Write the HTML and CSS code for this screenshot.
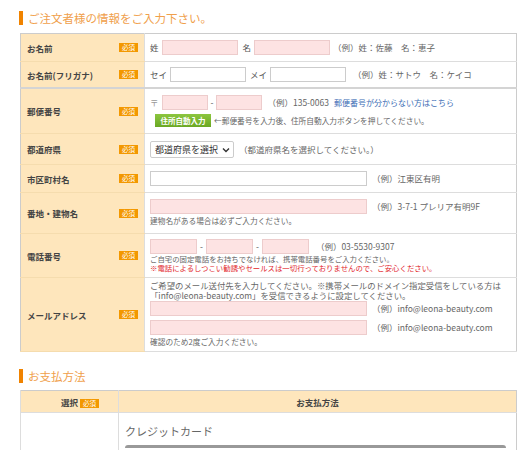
FILE: index.html
```html
<!DOCTYPE html>
<html lang="ja">
<head>
  <meta charset="UTF-8" />
  <title>ご注文者様の情報</title>
  <link rel="stylesheet" href="styles.css">
</head>
<body>
  <div class="page">
    <h2 class="sec-title">ご注文者様の情報をご入力下さい。</h2>
    <table class="form-table">
      <colgroup><col class="c-label"><col></colgroup>
      <tr>
        <th><div class="th-in"><span>お名前</span><span class="req">必須</span></div></th>
        <td>
          <div class="line">
            <span>姓</span><input class="inp need w-name" type="text">
            <span class="ml2">名</span><input class="inp need w-name" type="text">
            <span class="ex">（例）姓：佐藤　名：恵子</span>
          </div>
        </td>
      </tr>
      <tr class="row-kana">
        <th><div class="th-in"><span>お名前(フリガナ)</span><span class="req">必須</span></div></th>
        <td>
          <div class="line">
            <span>セイ</span><input class="inp w-name" type="text">
            <span class="ml1">メイ</span><input class="inp w-name" type="text">
            <span class="ex ml4">（例）姓：サトウ　名：ケイコ</span>
          </div>
        </td>
      </tr>
      <tr>
        <th><div class="th-in"><span>郵便番号</span><span class="req">必須</span></div></th>
        <td>
          <div class="line">
            <span class="zip-mark">〒</span><input class="inp need w-zip" type="text">
            <span>-</span><input class="inp need w-zip" type="text">
            <span class="ex ml2">（例）135-0063</span>
            <a class="link" href="#">郵便番号が分からない方はこちら</a>
          </div>
          <div class="line mt4">
            <button class="btn-auto" type="button">住所自動入力</button>
            <span class="note">←郵便番号を入力後、住所自動入力ボタンを押してください。</span>
          </div>
        </td>
      </tr>
      <tr class="row-pref">
        <th><div class="th-in"><span>都道府県</span><span class="req">必須</span></div></th>
        <td>
          <div class="line">
            <select class="pref"><option>都道府県を選択</option></select>
            <span class="ex ml2">（都道府県名を選択してください。）</span>
          </div>
        </td>
      </tr>
      <tr>
        <th><div class="th-in"><span>市区町村名</span><span class="req">必須</span></div></th>
        <td>
          <div class="line">
            <input class="inp w-long" type="text">
            <span class="ex ml2">（例）江東区有明</span>
          </div>
        </td>
      </tr>
      <tr>
        <th><div class="th-in"><span>番地・建物名</span><span class="req">必須</span></div></th>
        <td>
          <div class="line">
            <input class="inp need w-long" type="text">
            <span class="ex ml2">（例）3-7-1 プレリア有明9F</span>
          </div>
          <p class="note addr">建物名がある場合は必ずご入力ください。</p>
        </td>
      </tr>
      <tr class="row-tel">
        <th><div class="th-in"><span>電話番号</span><span class="req">必須</span></div></th>
        <td>
          <div class="line">
            <input class="inp need w-tel" type="text"><span>-</span>
            <input class="inp need w-tel" type="text"><span>-</span>
            <input class="inp need w-tel" type="text">
            <span class="ex ml4">（例）03-5530-9307</span>
          </div>
          <p class="note tight">ご自宅の固定電話をお持ちでなければ、携帯電話番号をご入力ください。</p>
          <p class="note tight red">※電話によるしつこい勧誘やセールスは一切行っておりませんので、ご安心ください。</p>
        </td>
      </tr>
      <tr class="row-mail">
        <th><div class="th-in"><span>メールアドレス</span><span class="req">必須</span></div></th>
        <td>
          <p class="note mail">ご希望のメール送付先を入力してください。※携帯メールのドメイン指定受信をしている方は<br>「info@leona-beauty.com」を受信できるように設定してください。</p>
          <div class="line">
            <input class="inp need w-long" type="text">
            <span class="ex ml2">（例）info@leona-beauty.com</span>
          </div>
          <div class="line mt4">
            <input class="inp need w-long" type="text">
            <span class="ex ml2">（例）info@leona-beauty.com</span>
          </div>
          <p class="note confirm">確認のため2度ご入力ください。</p>
        </td>
      </tr>
    </table>

    <h2 class="sec-title sec-pay">お支払方法</h2>
    <table class="pay-table">
      <colgroup><col class="c-select"><col></colgroup>
      <tr>
        <th class="th-select">選択 <span class="req">必須</span></th>
        <th>お支払方法</th>
      </tr>
      <tr>
        <td></td>
        <td>
          <p class="pay-name">クレジットカード</p>
          <div class="pay-box"></div>
        </td>
      </tr>
    </table>
  </div>
</body>
</html>
```

FILE: styles.css
```css
* {
  box-sizing: border-box;
}
body {
  margin: 0;
  background: #fff;
  font-family: "Noto Sans CJK JP", "Noto Sans", sans-serif;
  color: #555;
  overflow: hidden;
}
.page {
  padding: 11px 0 0 19px;
}
.sec-title {
  margin: 0 0 8px;
  padding-left: 5px;
  border-left: 4px solid #f08300;
  font-size: 11.5px;
  font-weight: normal;
  line-height: 14px;
  color: #f0a04b;
}
.sec-pay {
  margin-top: 17px;
  margin-bottom: 7px;
}

/* order form */
.form-table {
  width: 497px;
  margin-left: 1px;
  border-collapse: collapse;
  table-layout: fixed;
  border: 1px solid #ccc;
}
.c-label {
  width: 124px;
}
.form-table th {
  background: #fee6bc;
  border-bottom: 1px solid #f5dcae;
  padding: 0 6px;
  text-align: left;
  font-size: 8.5px;
  font-weight: bold;
  color: #444;
}
.form-table td {
  padding: 6px 5px;
  border-bottom: 1px solid #ddd;
  border-left: 1px solid #ddd;
  font-size: 8.5px;
  line-height: 11px;
}
.form-table .row-kana th,
.form-table .row-kana td {
  border-bottom: 2px solid #d4d4d4;
}
.form-table .row-kana td {
  padding-top: 5px;
  padding-bottom: 5px;
}
.form-table .row-pref td {
  padding-top: 7px;
  padding-bottom: 6px;
}
.form-table .row-tel td {
  padding-top: 5px;
  padding-bottom: 5px;
}
.form-table .row-mail td {
  padding-top: 3px;
  padding-bottom: 4px;
}
.th-in {
  display: flex;
  justify-content: space-between;
  align-items: center;
}
.req {
  display: inline-block;
  background: #f39800;
  color: #fff;
  font-size: 6.5px;
  font-weight: normal;
  line-height: 9px;
  width: 19px;
  text-align: center;
}
.line {
  display: flex;
  align-items: center;
  gap: 3px;
  white-space: nowrap;
}
.ml1 { margin-left: 1px; }
.ml2 { margin-left: 2px; }
.ml4 { margin-left: 4px; }
.mt4 { margin-top: 4px; }

.inp {
  height: 15px;
  margin: 0;
  padding: 0 2px;
  border: 1px solid #ccc;
  background: #fff;
  font-size: 9px;
}
.inp.need {
  background: #fde3e3;
  border-color: #edcccc;
}
.w-name { width: 76px; }
.w-zip { width: 46px; }
.w-long { width: 217px; }
.w-tel { width: 47px; }
.zip-mark {
  color: #999;
}
.ex {
  color: #666;
}
.link {
  margin-left: 2px;
  color: #3d6db5;
  text-decoration: none;
  font-size: 8px;
}
.btn-auto {
  margin-left: 5px;
  height: 13px;
  width: 56px;
  padding: 0;
  border: none;
  background: linear-gradient(#8cc63f, #6aa823);
  color: #fff;
  font-family: inherit;
  font-size: 7.5px;
  font-weight: bold;
}
.note {
  margin: 0;
  font-size: 7.7px;
  line-height: 10px;
  color: #666;
}
.note.addr {
  line-height: 12px;
  padding-top: 1px;
}
.note.tight {
  font-size: 7.4px;
  line-height: 9px;
}
.note.red {
  color: #e2262b;
}
.note.mail {
  font-size: 8.4px;
  line-height: 9.5px;
  margin-bottom: 1px;
}
.note.confirm {
  line-height: 11px;
  margin-top: 1px;
}
.pref {
  height: 17px;
  width: 84px;
  padding: 0 12px 0 4px;
  border: 1px solid #ccc;
  border-radius: 2px;
  background: #fff url("data:image/svg+xml,%3Csvg xmlns='http://www.w3.org/2000/svg' width='8' height='6'%3E%3Cpath d='M1 1.5l3 3 3-3' fill='none' stroke='%23333' stroke-width='1.4'/%3E%3C/svg%3E") no-repeat right 3px center;
  appearance: none;
  font-family: inherit;
  font-size: 9px;
  color: #333;
}

/* payment */
.pay-table {
  width: 497px;
  margin-left: 1px;
  border-collapse: collapse;
  table-layout: fixed;
  border: 1px solid #ccc;
}
.c-select {
  width: 98px;
}
.pay-table th {
  height: 22px;
  background: #fee6bc;
  border-bottom: 1px solid #ddd;
  border-left: 1px solid #ddd;
  font-size: 8.5px;
  font-weight: bold;
  color: #444;
}
.pay-table .th-select {
  text-align: right;
  padding-right: 19px;
}
.pay-table td {
  border-left: 1px solid #ddd;
  padding: 10px 6px 0;
  vertical-align: top;
}
.pay-name {
  margin: 0 0 6px;
  font-size: 11px;
  line-height: 16px;
  color: #666;
}
.pay-box {
  height: 20px;
  border-top: 3px solid #999;
  border-radius: 3px 3px 0 0;
  margin-right: 4px;
}
```
